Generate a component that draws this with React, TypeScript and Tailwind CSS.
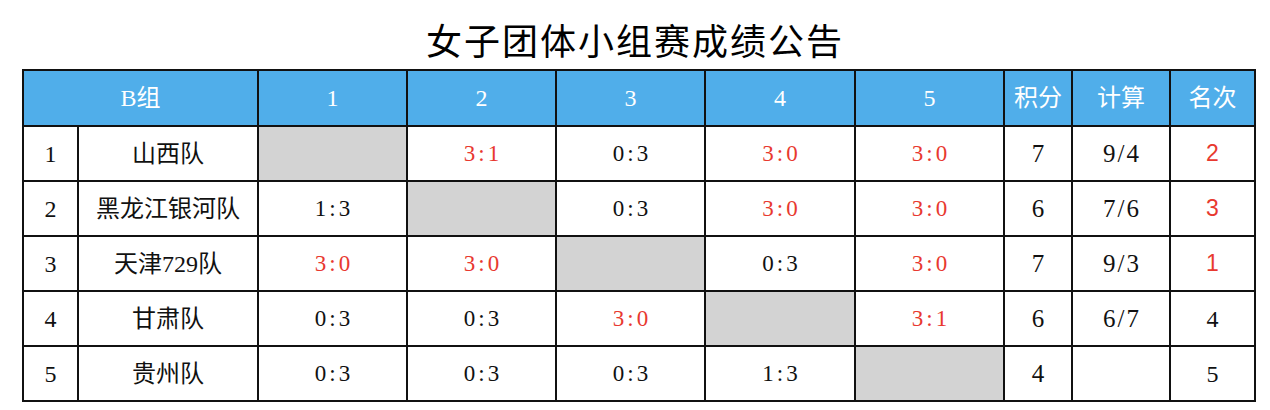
import React from "react";

type Cell = { text?: string; red?: boolean; blank?: boolean };

const teams = [
    { no: "1", name: "山西队", points: "7", calc: "9/4", rank: "2", rankRed: true },
    { no: "2", name: "黑龙江银河队", points: "6", calc: "7/6", rank: "3", rankRed: true },
    { no: "3", name: "天津729队", points: "7", calc: "9/3", rank: "1", rankRed: true },
    { no: "4", name: "甘肃队", points: "6", calc: "6/7", rank: "4", rankRed: false },
    { no: "5", name: "贵州队", points: "4", calc: "", rank: "5", rankRed: false },
];

const scores: Cell[][] = [
    [{ blank: true }, { text: "3:1", red: true }, { text: "0:3" }, { text: "3:0", red: true }, { text: "3:0", red: true }],
    [{ text: "1:3" }, { blank: true }, { text: "0:3" }, { text: "3:0", red: true }, { text: "3:0", red: true }],
    [{ text: "3:0", red: true }, { text: "3:0", red: true }, { blank: true }, { text: "0:3" }, { text: "3:0", red: true }],
    [{ text: "0:3" }, { text: "0:3" }, { text: "3:0", red: true }, { blank: true }, { text: "3:1", red: true }],
    [{ text: "0:3" }, { text: "0:3" }, { text: "0:3" }, { text: "1:3" }, { blank: true }],
];

const serif = "font-['Liberation_Serif','Noto_Sans_CJK_SC',serif]";
const td = "border-2 border-[#111] text-center p-0";

export default function App() {
    return (
        <div className={`w-[1270px] h-[410px] bg-white ${serif}`}>
            {/* Title */}
            <div className="h-[69px] flex items-end justify-center pb-[12px]">
                <h1 className="text-[36px] leading-none tracking-[2px] text-black font-['Noto_Sans_CJK_SC',sans-serif]">
                    女子团体小组赛成绩公告
                </h1>
            </div>

            <table className="ml-[22px] w-[1232px] table-fixed border-collapse border-2 border-[#111] text-[24px] leading-none text-[#111]">
                <colgroup>
                    <col className="w-[55px]" />
                    <col className="w-[180px]" />
                    <col className="w-[149px]" />
                    <col className="w-[149px]" />
                    <col className="w-[149px]" />
                    <col className="w-[150px]" />
                    <col className="w-[149px]" />
                    <col className="w-[68px]" />
                    <col className="w-[98px]" />
                    <col className="w-[85px]" />
                </colgroup>
                <thead>
                    <tr className="h-[56px] bg-[#50aeea] text-white">
                        <th colSpan={2} className={`${td} font-normal`}>B组</th>
                        <th className={`${td} font-normal`}>1</th>
                        <th className={`${td} font-normal`}>2</th>
                        <th className={`${td} font-normal`}>3</th>
                        <th className={`${td} font-normal`}>4</th>
                        <th className={`${td} font-normal`}>5</th>
                        <th className={`${td} font-normal`}>积分</th>
                        <th className={`${td} font-normal`}>计算</th>
                        <th className={`${td} font-normal`}>名次</th>
                    </tr>
                </thead>
                <tbody>
                    {teams.map((t, i) => (
                        <tr key={t.no} className="h-[55px]">
                            <td className={td}>{t.no}</td>
                            <td className={td}>{t.name}</td>
                            {scores[i].map((c, j) => (
                                <td
                                    key={j}
                                    className={`${td} text-[23px] ${c.blank ? "bg-[#d3d3d3]" : ""} ${c.red ? "text-[#e8392f]" : ""}`}
                                >
                                    <span className="tracking-[3px] pl-[3px]">{c.text}</span>
                                </td>
                            ))}
                            <td className={`${td} text-[25px]`}>{t.points}</td>
                            <td className={`${td} text-[25px]`}>
                                <span className="tracking-[2px] pl-[2px]">{t.calc}</span>
                            </td>
                            <td
                                className={`${td} ${t.rankRed ? "text-[#e8392f] font-['Liberation_Sans',sans-serif] text-[23px]" : ""}`}
                            >
                                {t.rank}
                            </td>
                        </tr>
                    ))}
                </tbody>
            </table>
        </div>
    );
}
